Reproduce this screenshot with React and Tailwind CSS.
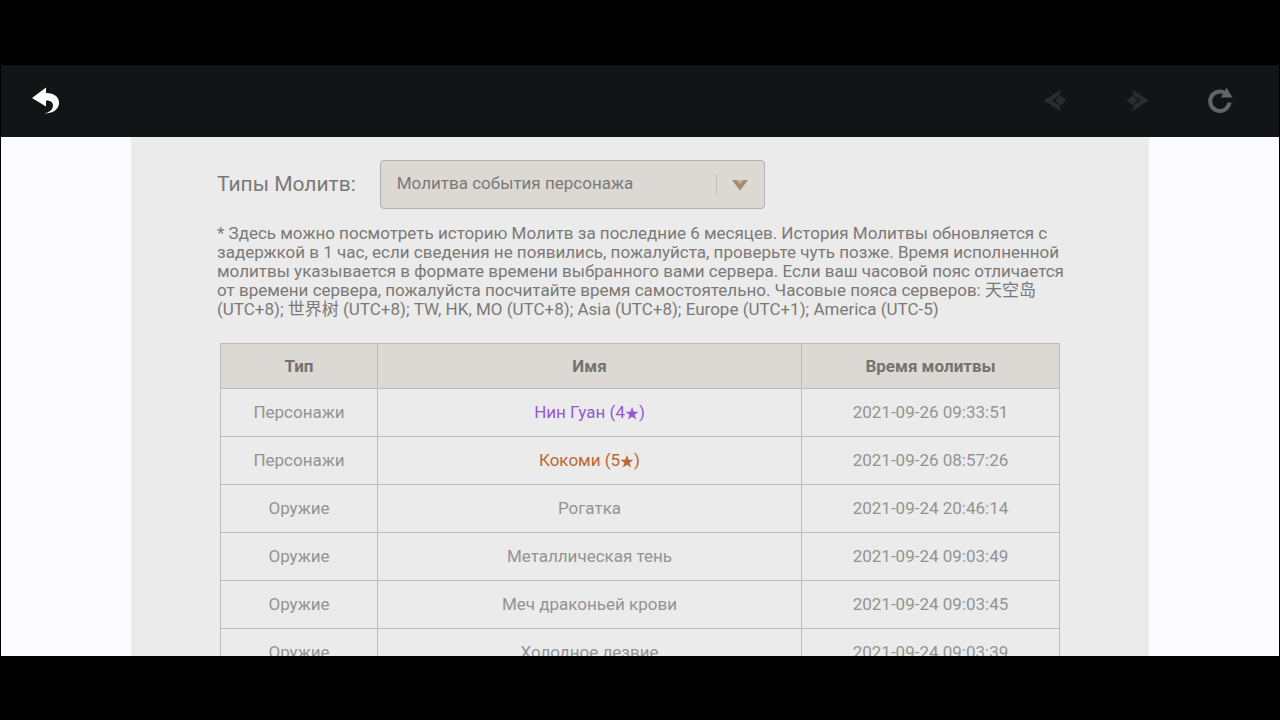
import React, { useState } from "react";

const banners = [
  "Молитва события персонажа",
  "Молитва события оружия",
  "Стандартная молитва",
  "Молитва новичка",
];

const wishes = [
  { type: "Персонажи", name: "Нин Гуан", stars: 4, time: "2021-09-26 09:33:51" },
  { type: "Персонажи", name: "Кокоми", stars: 5, time: "2021-09-26 08:57:26" },
  { type: "Оружие", name: "Рогатка", stars: 3, time: "2021-09-24 20:46:14" },
  { type: "Оружие", name: "Металлическая тень", stars: 3, time: "2021-09-24 09:03:49" },
  { type: "Оружие", name: "Меч драконьей крови", stars: 3, time: "2021-09-24 09:03:45" },
  { type: "Оружие", name: "Холодное лезвие", stars: 3, time: "2021-09-24 09:03:39" },
];

const starColors = {
  4: "text-[#9557d6]",
  5: "text-[#bd662f]",
};

function BackIcon() {
  return (
    <svg className="h-7 w-7" viewBox="0 0 28 28" fill="#fff" aria-hidden="true">
      <path d="M1 11 L15 0.500 V6 C22.500 6 28.500 9.500 28 16.500 C27.500 22.500 22 26.500 13 26.500 C18.500 25.500 22 22.500 22 18.500 C22 15 19.500 13.500 15 13.500 V19.500 Z" />
    </svg>
  );
}

function ArrowIcon({ flipped }) {
  return (
    <svg
      className={flipped ? "h-6 w-6 -scale-x-100" : "h-6 w-6"}
      viewBox="0 0 24 24"
      fill="#2a2d2e"
      aria-hidden="true"
    >
      <path d="M0 11.500 L17 0.500 L15 7 L8 11.500 L15 16 L17 22.500 Z" />
      <path d="M11 11.500 L16.500 6.500 L22 11.500 L16.500 16.500 Z" />
    </svg>
  );
}

function ReloadIcon() {
  return (
    <svg className="h-7 w-7" viewBox="0 0 28 28" aria-hidden="true">
      <path d="M23.500 15.500 A9.700 9.700 0 1 1 19 6" fill="none" stroke="#636465" strokeWidth="4" />
      <path d="M20.500 0.500 L26.500 10.500 L15 10.500 Z" fill="#636465" />
    </svg>
  );
}

function TopBar() {
  return (
    <header className="flex h-[72px] shrink-0 items-center justify-between bg-[#121516] pr-[45px] pl-[30px]">
      <button type="button" aria-label="Назад">
        <BackIcon />
      </button>
      <nav className="flex items-center gap-[57px]">
        <button type="button" aria-label="Предыдущая страница">
          <ArrowIcon />
        </button>
        <button type="button" aria-label="Следующая страница">
          <ArrowIcon flipped />
        </button>
        <button type="button" aria-label="Обновить">
          <ReloadIcon />
        </button>
      </nav>
    </header>
  );
}

function BannerSelect() {
  const [banner, setBanner] = useState(banners[0]);

  return (
    <div className="flex items-center gap-6">
      <label htmlFor="banner" className="text-[21px] text-[#7b7977]">
        Типы Молитв:
      </label>
      <div className="relative w-[385px]">
        <select
          id="banner"
          value={banner}
          onChange={(e) => setBanner(e.target.value)}
          className="h-[49px] w-full appearance-none rounded-[4px] border border-[#b3b1ae] bg-[#dcd9d4] pr-14 pb-[2px] pl-4 text-[17px] text-[#7b7977]"
        >
          {banners.map((b) => (
            <option key={b}>{b}</option>
          ))}
        </select>
        {/* divider and arrow over the select */}
        <div className="pointer-events-none absolute inset-y-0 right-4 flex items-center gap-[14px]">
          <span className="h-5 w-px bg-[#c2bfba]" />
          <svg className="h-3 w-[18px]" viewBox="0 0 18 12" aria-hidden="true">
            <path d="M1 1 H17 L9 11.500 Z" fill="#a58a6c" />
            <path d="M5.500 1 H12.500 L9 5 Z" fill="#d3b493" />
          </svg>
        </div>
      </div>
    </div>
  );
}

function WishName({ wish }) {
  if (wish.stars < 4) return wish.name;

  return (
    <>
      {wish.name} ({wish.stars}
      <span className="text-sm leading-none">★</span>)
    </>
  );
}

function WishTable() {
  const cell = "border border-[#bfbdb9]";

  return (
    <table className="mx-[3px] mt-6 w-[840px] table-fixed border-collapse text-center text-[17px]">
      <colgroup>
        <col className="w-[157px]" />
        <col />
        <col className="w-[258px]" />
      </colgroup>
      <thead className="bg-[#dcd9d4] text-[#757371]">
        <tr className="h-[45px]">
          <th className={`${cell} pt-[2px]`}>Тип</th>
          <th className={`${cell} pt-[2px]`}>Имя</th>
          <th className={`${cell} pt-[2px]`}>Время молитвы</th>
        </tr>
      </thead>
      <tbody className="text-[#939393]">
        {wishes.map((wish) => (
          <tr key={wish.time} className="h-12">
            <td className={cell}>{wish.type}</td>
            <td className={`${cell} ${starColors[wish.stars] || ""}`}>
              <WishName wish={wish} />
            </td>
            <td className={cell}>{wish.time}</td>
          </tr>
        ))}
      </tbody>
    </table>
  );
}

function App() {
  return (
    <div className="flex h-screen flex-col bg-black px-px pt-[65px] pb-16 font-[Roboto,'Noto_Sans_CJK_SC',sans-serif]">
      <TopBar />
      <main className="min-h-0 flex-1 overflow-hidden bg-[#fbfaff]">
        <div className="mx-auto min-h-full max-w-[1018px] bg-[#ebebeb] pt-[23px] pr-[84px] pl-[86px]">
          <BannerSelect />
          <p className="mt-[15px] text-[17px] leading-[19px] text-[#7b7977]">
            * Здесь можно посмотреть историю Молитв за последние 6 месяцев. История Молитвы обновляется с
            задержкой в 1 час, если сведения не появились, пожалуйста, проверьте чуть позже. Время исполненной
            молитвы указывается в формате времени выбранного вами сервера. Если ваш часовой пояс отличается
            от времени сервера, пожалуйста посчитайте время самостоятельно. Часовые пояса серверов: 天空岛
            (UTC+8); 世界树 (UTC+8); TW, HK, MO (UTC+8); Asia (UTC+8); Europe (UTC+1); America (UTC-5)
          </p>
          <WishTable />
        </div>
      </main>
    </div>
  );
}

export default App;
